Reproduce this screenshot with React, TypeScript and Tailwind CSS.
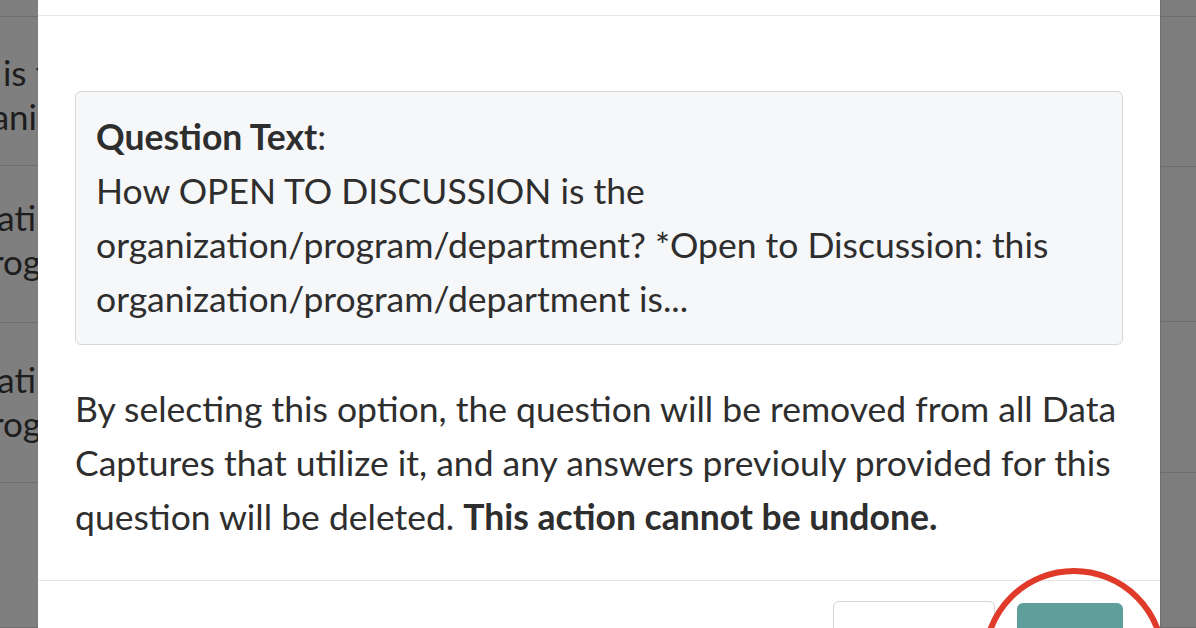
const rowsLeft = [
  { h: 'h-[149px]', pt: 'pt-[33px]', lines: [{ t: 'is t', w: 'w-[48px]' }, { t: 'organi', w: 'w-[37px]' }] },
  { h: 'h-[157px]', pt: 'pt-[29px]', lines: [{ t: 'organizati', w: 'w-[36px]' }, { t: 'prog', w: 'w-[41px]' }] },
  { h: 'h-[160px]', pt: 'pt-[34px]', lines: [{ t: 'organizati', w: 'w-[36px]' }, { t: 'prog', w: 'w-[41px]' }] },
  { h: 'h-[145px]', pt: 'pt-0', lines: [] },
]

const rowsRight = ['h-[150px]', 'h-[155px]', 'h-[151px]', 'h-[155px]']

function PageStripLeft() {
  return (
    <div className="flex w-[38px] shrink-0 flex-col overflow-hidden bg-[#7f7f7f]">
      <div className="h-[17px] shrink-0 border-b border-[#6e6e6e]" />
      {rowsLeft.map((row, i) => (
        <div key={i} className={`${row.h} ${row.pt} flex shrink-0 flex-col border-b border-[#6e6e6e]`}>
          {row.lines.map((line) => (
            <div
              key={line.t}
              className={`${line.w} flex h-[44px] shrink-0 justify-end whitespace-nowrap text-[35px] leading-[44px] text-[#1d1d1d]`}
            >
              {line.t}
            </div>
          ))}
        </div>
      ))}
    </div>
  )
}

function PageStripRight() {
  return (
    <div className="flex w-[36px] shrink-0 flex-col border-l border-[#6f6f6f] bg-[#7d7d7d]">
      <div className="h-[17px] shrink-0 border-b border-[#6e6e6e]" />
      {rowsRight.map((h, i) => (
        <div key={i} className={`${h} shrink-0 border-b border-[#6e6e6e]`} />
      ))}
    </div>
  )
}

export default function App() {
  return (
    <div
      className="relative flex h-[628px] w-[1196px] overflow-hidden bg-[#7f7f7f]"
      style={{ fontFamily: 'Lato, "Open Sans", sans-serif' }}
    >
      <PageStripLeft />

      <div className="flex w-[1122px] shrink-0 flex-col bg-white">
        <div className="h-[16px] shrink-0 border-b border-[#e6e6e6]" />

        <div className="shrink-0 px-[37px] pt-[75px] pb-[36px]">
          <div className="rounded-[6px] border border-[#d8d8d8] bg-[#f6f7f8] px-[20px] py-[18px] text-[35.5px] leading-[54px] text-[#2e2e2e]">
            <div>
              <span className="font-bold">Question Text</span>:
            </div>
            <div>How OPEN TO DISCUSSION is the</div>
            <div>organization/program/department? *Open to Discussion: this</div>
            <div>organization/program/department is...</div>
          </div>

          <p className="mt-[37px] text-[35.5px] leading-[54px] text-[#2e2e2e]">
            By selecting this option, the question will be removed from all Data Captures that utilize it, and any answers previouly provided for this question will be deleted.{' '}
            <span className="font-bold">This action cannot be undone.</span>
          </p>
        </div>

        <div className="flex shrink-0 justify-end gap-[22px] border-t border-[#e6e6e6] px-[37px] pt-[20px]">
          <button type="button" className="h-[80px] w-[162px] shrink-0 rounded-[6px] border border-[#d4d4d4] bg-white text-[28px] text-[#333333]">
            Cancel
          </button>
          <button type="button" className="mt-[2px] h-[80px] w-[106px] shrink-0 rounded-[6px] bg-[#5e9f9c] text-[28px] text-white">
            Yes
          </button>
        </div>
      </div>

      <PageStripRight />

      <svg className="pointer-events-none absolute left-[980px] top-[566px]" width="188" height="190" viewBox="0 0 188 190">
        <circle cx="94" cy="94" r="89" fill="none" stroke="#e03a2b" strokeWidth="6" />
      </svg>
    </div>
  )
}
